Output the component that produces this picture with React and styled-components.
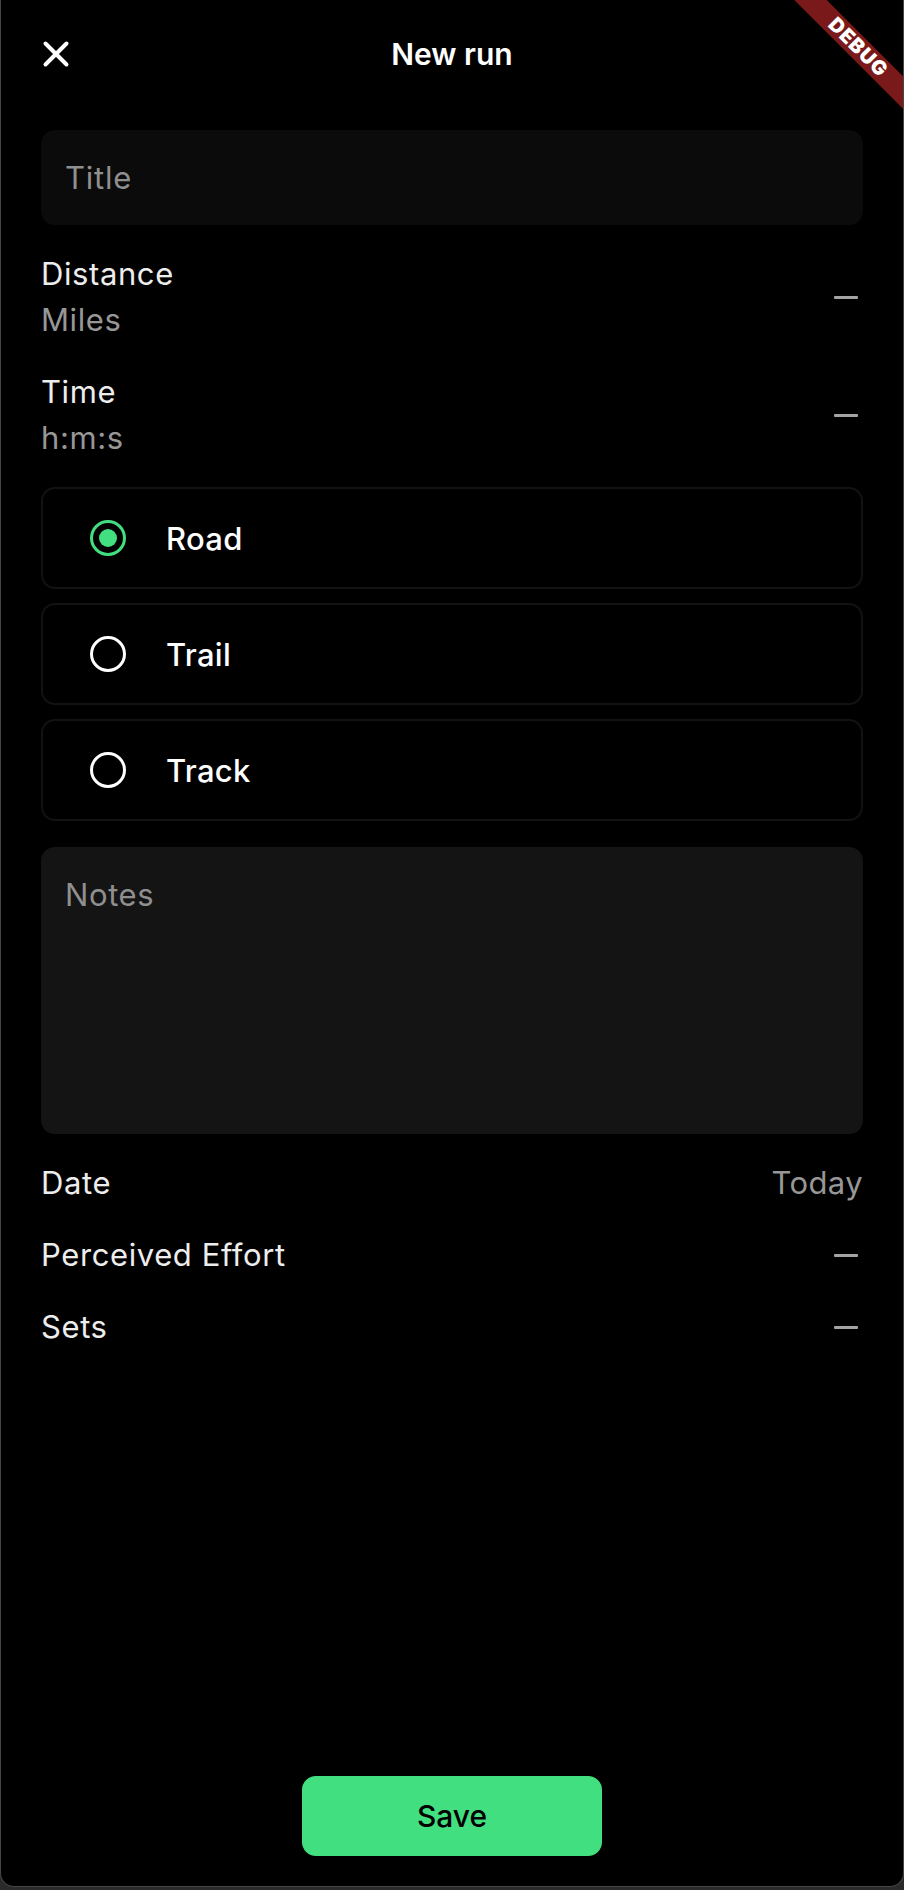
import React, { useState } from "react";
import styled, { createGlobalStyle } from "styled-components";

const GlobalStyle = createGlobalStyle`
  html, body {
    margin: 0;
    padding: 0;
    background: #2a2a2a;
  }
  * {
    box-sizing: border-box;
  }
  body {
    font-family: Inter, "Noto Sans", "Liberation Sans", sans-serif;
    -webkit-font-smoothing: antialiased;
  }
`;

const TYPES = ["Road", "Trail", "Track"];

const CloseIcon = () => (
  <svg width="28" height="28" viewBox="0 0 28 28" fill="none">
    <path
      d="M3.5 3.5 L24.5 24.5 M24.5 3.5 L3.5 24.5"
      stroke="#fff"
      strokeWidth="4"
      strokeLinecap="round"
    />
  </svg>
);

const App = () => {
  const [type, setType] = useState("Road");

  return (
    <>
      <GlobalStyle />
      <Window>
        <DebugBanner>DEBUG</DebugBanner>

        <Header>
          <CloseButton aria-label="Close">
            <CloseIcon />
          </CloseButton>
          <HeaderTitle>New run</HeaderTitle>
        </Header>

        <Form>
          <Field placeholder="Title" />

          <Row>
            <LabelStack>
              <Label>Distance</Label>
              <SubLabel>Miles</SubLabel>
            </LabelStack>
            <Dash />
          </Row>

          <Row>
            <LabelStack>
              <Label>Time</Label>
              <SubLabel>h:m:s</SubLabel>
            </LabelStack>
            <Dash />
          </Row>

          <Options>
            {TYPES.map((t) => (
              <Option key={t} onClick={() => setType(t)}>
                <Radio checked={type === t} />
                <OptionLabel>{t}</OptionLabel>
              </Option>
            ))}
          </Options>

          <NotesField placeholder="Notes" />

          <Row>
            <Label>Date</Label>
            <Value>Today</Value>
          </Row>
          <Row>
            <Label>Perceived Effort</Label>
            <Dash />
          </Row>
          <Row>
            <Label>Sets</Label>
            <Dash />
          </Row>
        </Form>

        <Footer>
          <SaveButton>Save</SaveButton>
        </Footer>
      </Window>
    </>
  );
};

export default App;

// ===== STYLES =====

const Window = styled.div`
  position: relative;
  width: 904px;
  height: 1887px;
  display: flex;
  flex-direction: column;
  background: #000;
  border: 1px solid #464646;
  border-top: none;
  border-radius: 0 0 14px 14px;
  overflow: hidden;
  color: #ededed;
`;

const DebugBanner = styled.div`
  position: absolute;
  left: 747px;
  top: 36px;
  width: 220px;
  height: 23px;
  transform: rotate(45deg);
  background: #7a1919;
  color: #fff;
  font-size: 20px;
  font-weight: 900;
  letter-spacing: 1px;
  line-height: 23px;
  text-align: center;
  z-index: 2;
`;

const Header = styled.div`
  position: relative;
  height: 108px;
  display: flex;
  align-items: center;
  justify-content: center;
`;

const CloseButton = styled.button`
  position: absolute;
  left: 41px;
  top: 40px;
  width: 28px;
  height: 28px;
  padding: 0;
  border: none;
  background: none;
  cursor: pointer;
  display: flex;
`;

const HeaderTitle = styled.h1`
  margin: 0;
  font-size: 30px;
  font-weight: 600;
  color: #fff;
`;

const Form = styled.div`
  flex: 1;
  display: flex;
  flex-direction: column;
  gap: 26px;
  padding: 22px 40px 0 40px;
`;

const Field = styled.input`
  width: 100%;
  height: 95px;
  padding: 0 24px;
  border: none;
  border-radius: 14px;
  background: #0b0b0b;
  color: #ededed;
  font-family: inherit;
  font-size: 31px;
  letter-spacing: 0.8px;
  outline: none;

  &::placeholder {
    color: #8f8f8f;
  }
`;

const NotesField = styled.textarea`
  width: 100%;
  height: 287px;
  padding: 24px;
  border: none;
  border-radius: 14px;
  background: #141414;
  color: #ededed;
  font-family: inherit;
  font-size: 31px;
  letter-spacing: 0.6px;
  line-height: 47px;
  resize: none;
  outline: none;

  &::placeholder {
    color: #8f8f8f;
  }
`;

const Row = styled.div`
  display: flex;
  align-items: center;
  justify-content: space-between;
  min-height: 46px;
`;

const LabelStack = styled.div`
  display: flex;
  flex-direction: column;
`;

const Label = styled.span`
  font-size: 31px;
  letter-spacing: 0.6px;
  line-height: 46px;
  color: #ededed;
`;

const SubLabel = styled(Label)`
  color: #979797;
`;

const Value = styled(Label)`
  color: #979797;
  letter-spacing: 0.4px;
`;

const Dash = styled.span`
  width: 24px;
  height: 3px;
  margin-right: 5px;
  background: #a3a3a3;
  border-radius: 1px;
`;

const Options = styled.div`
  display: flex;
  flex-direction: column;
  gap: 14px;
`;

const Option = styled.div`
  height: 102px;
  display: flex;
  align-items: center;
  gap: 40px;
  padding-left: 47px;
  border: 2px solid #121212;
  border-radius: 14px;
  cursor: pointer;
`;

const Radio = styled.span`
  width: 36px;
  height: 36px;
  border-radius: 50%;
  border: 3.5px solid ${({ checked }) => (checked ? "#42df80" : "#fff")};
  display: flex;
  align-items: center;
  justify-content: center;

  &::after {
    content: "";
    width: 18px;
    height: 18px;
    border-radius: 50%;
    background: ${({ checked }) => (checked ? "#42df80" : "transparent")};
  }
`;

const OptionLabel = styled.span`
  font-size: 31px;
  font-weight: 500;
  letter-spacing: 0.3px;
  color: #fff;
`;

const Footer = styled.div`
  display: flex;
  justify-content: center;
  padding-bottom: 30px;
`;

const SaveButton = styled.button`
  width: 300px;
  height: 80px;
  border: none;
  border-radius: 14px;
  background: #42df80;
  color: #000;
  font-family: inherit;
  font-size: 30px;
  font-weight: 500;
  cursor: pointer;
`;
